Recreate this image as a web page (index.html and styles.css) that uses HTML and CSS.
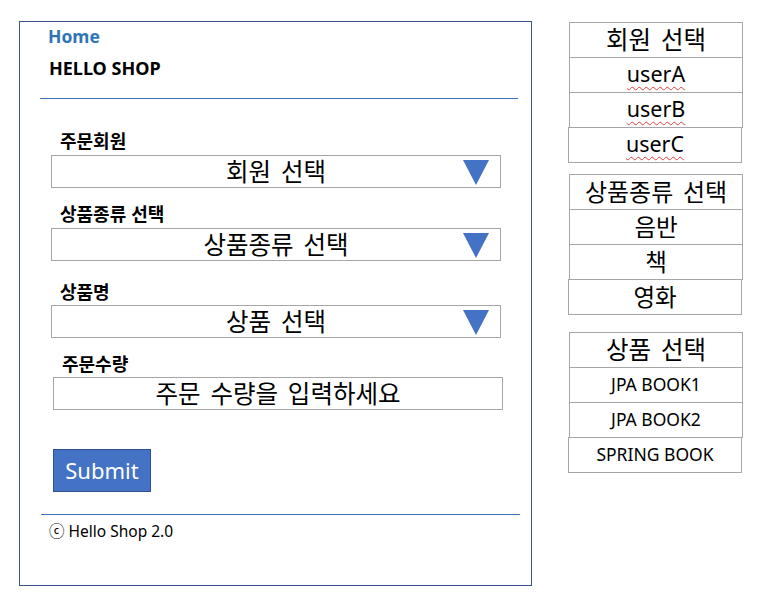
FILE: index.html
```html
<!DOCTYPE html>
<html lang="ko">
<head>
<meta charset="utf-8">
<title>Hello Shop - 주문</title>
<link rel="stylesheet" href="styles.css">
</head>
<body>
<div class="page">
  <div class="frame">
    <div class="home">Home</div>
    <div class="brand">HELLO SHOP</div>
    <div class="rule rule-top"></div>
    <form class="order">
      <div class="label l1">주문회원</div>
      <div class="select">
        <span class="select-text">회원 선택</span>
        <svg class="caret" width="26" height="25" viewBox="0 0 26 25"><polygon points="0,0 26,0 13,25" fill="#4472c4"/></svg>
      </div>
      <div class="label l2">상품종류 선택</div>
      <div class="select">
        <span class="select-text">상품종류 선택</span>
        <svg class="caret" width="26" height="25" viewBox="0 0 26 25"><polygon points="0,0 26,0 13,25" fill="#4472c4"/></svg>
      </div>
      <div class="label l3">상품명</div>
      <div class="select">
        <span class="select-text">상품 선택</span>
        <svg class="caret" width="26" height="25" viewBox="0 0 26 25"><polygon points="0,0 26,0 13,25" fill="#4472c4"/></svg>
      </div>
      <div class="label l4">주문수량</div>
      <div class="input">주문 수량을 입력하세요</div>
      <div class="submit">Submit</div>
    </form>
    <div class="rule rule-bottom"></div>
    <div class="footer">ⓒ Hello Shop 2.0</div>
  </div>

  <div class="lists">
    <div class="list list-members">
      <div class="row head">회원 선택</div>
      <div class="row"><span class="spell">userA</span></div>
      <div class="row"><span class="spell">userB</span></div>
      <div class="row shifted"><span class="spell">userC</span></div>
    </div>
    <div class="list list-kinds">
      <div class="row head">상품종류 선택</div>
      <div class="row">음반</div>
      <div class="row">책</div>
      <div class="row shifted">영화</div>
    </div>
    <div class="list list-items">
      <div class="row head">상품 선택</div>
      <div class="row small">JPA BOOK1</div>
      <div class="row small">JPA BOOK2</div>
      <div class="row small shifted">SPRING BOOK</div>
    </div>
  </div>
</div>
</body>
</html>
```

FILE: styles.css
```css
html, body {
  margin: 0;
  padding: 0;
  background: #ffffff;
}

body {
  font-family: "Noto Sans", "Noto Sans CJK KR", sans-serif;
  color: #000000;
}

.page {
  display: flex;
  align-items: flex-start;
  padding: 21px 0 0 19px;
}

.frame {
  box-sizing: border-box;
  width: 513px;
  height: 565px;
  border: 1px solid #3a5289;
  padding-top: 3px;
}

.home {
  font-size: 17.5px;
  font-weight: 700;
  line-height: 22px;
  color: #2e75b6;
  padding-left: 28px;
}

.brand {
  font-size: 18px;
  font-weight: 700;
  line-height: 22px;
  margin-top: 10px;
  padding-left: 29px;
}

.rule {
  height: 1px;
  background: #4472c4;
}

.rule-top {
  margin: 19px 13px 0 20px;
}

.rule-bottom {
  margin: 22px 11px 0 21px;
}

.order {
  display: flex;
  flex-direction: column;
  align-items: flex-start;
  padding-left: 31px;
}

.label {
  font-family: "Noto Sans CJK KR", sans-serif;
  font-size: 18px;
  font-weight: 700;
  line-height: 22px;
  padding-left: 9px;
}

.l1 { margin-top: 30px; }
.l2 { margin-top: 14px; }
.l3 { margin-top: 19px; }
.l4 { margin-top: 14px; padding-left: 11px; }

.select,
.input {
  box-sizing: border-box;
  width: 450px;
  height: 33px;
  border: 1px solid #a6a6a6;
  font-family: "Noto Sans CJK KR", sans-serif;
  font-size: 24.5px;
  line-height: 29px;
  word-spacing: 3px;
  text-align: center;
}

.select {
  position: relative;
  margin-top: 4px;
}

.label.l3 + .select { margin-top: 3px; }

.caret {
  position: absolute;
  right: 11px;
  top: 4px;
  display: block;
}

.input {
  margin-top: 3px;
  margin-left: 2px;
}

.submit {
  box-sizing: border-box;
  width: 98px;
  height: 43px;
  margin-top: 39px;
  margin-left: 2px;
  background: #4472c4;
  border: 1px solid #2f528f;
  color: #ffffff;
  font-size: 22px;
  line-height: 40px;
  text-align: center;
}

.footer {
  font-size: 15.5px;
  line-height: 20px;
  margin-top: 6px;
  padding-left: 29px;
}

.lists {
  display: flex;
  flex-direction: column;
  margin-left: 36px;
  margin-top: 1px;
}

.list {
  display: flex;
  flex-direction: column;
}

.list-kinds { margin-top: 11px; }
.list-items { margin-top: 17px; }

.row {
  box-sizing: border-box;
  width: 174px;
  height: 36px;
  margin-left: 1px;
  border: 1px solid #a6a6a6;
  font-family: "Noto Sans", "Noto Sans CJK KR", sans-serif;
  font-size: 21.5px;
  line-height: 32px;
  text-align: center;
}

.row + .row {
  margin-top: -1px;
}

.row.head {
  font-family: "Noto Sans CJK KR", sans-serif;
  font-size: 24.5px;
  word-spacing: 3px;
}

.list-kinds .row {
  font-family: "Noto Sans CJK KR", sans-serif;
  font-size: 23.5px;
}

.list-kinds .row.head {
  font-size: 24px;
}

.row.small {
  font-size: 17.5px;
  line-height: 33px;
}

.row.shifted {
  margin-left: 0;
}

.spell {
  text-decoration: underline wavy #e0403c;
  text-decoration-thickness: 1px;
  text-underline-offset: 4px;
}
```
